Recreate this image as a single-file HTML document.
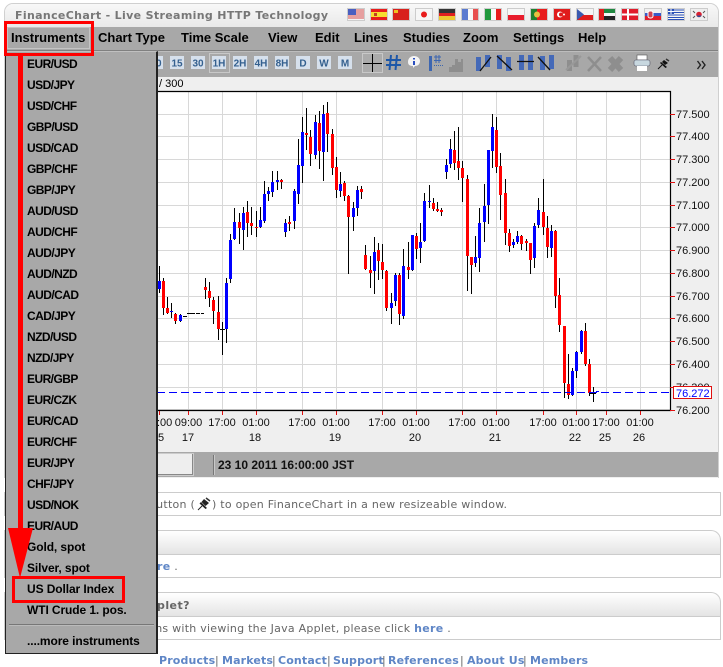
<!DOCTYPE html>
<html><head><meta charset="utf-8"><title>FinanceChart</title>
<style>
html,body{margin:0;padding:0;background:#fff}
#p{position:relative;width:723px;height:667px;overflow:hidden;background:#fff;font-family:"Liberation Sans",sans-serif}
#p div{position:absolute;white-space:nowrap}
.v{font-family:"DejaVu Sans",sans-serif;font-size:11px;color:#666;line-height:14px;letter-spacing:.25px}
.l{font-family:"DejaVu Sans",sans-serif;font-size:11px;font-weight:bold;color:#5f86c6;line-height:14px;letter-spacing:.3px}
.f{letter-spacing:.15px;top:654px}
.s{top:654px;letter-spacing:0}
.m{font-size:13px;font-weight:bold;color:#000;top:30px;line-height:16px}
.d{left:27px;font-size:12px;font-weight:bold;color:#000;line-height:16px;letter-spacing:-.1px}
.e{letter-spacing:-.55px}
.b{background:#fff;border:1px solid #ccc;box-sizing:border-box}
.h{background:linear-gradient(#fff,#e4e4e4);border:1px solid #ccc;box-sizing:border-box;border-radius:0 10px 0 0;border-bottom-color:#c8c8c8}
</style></head><body><div id="p">

<div style="left:4px;top:3px;width:715px;height:475px;background:#efefef;border-radius:9px 9px 0 0;border:1px solid #d0d0d0;border-bottom:0;box-sizing:border-box"></div>
<div style="left:5px;top:4px;width:713px;height:23px;border-radius:8px 8px 0 0;background:linear-gradient(#f8f8f8,#e9e9e9)"></div>
<div style="left:15px;top:9px;font:bold 11px/14px 'DejaVu Sans',sans-serif;color:#777;letter-spacing:.34px">FinanceChart - Live Streaming HTTP Technology</div>

<svg style="position:absolute;left:0;top:0" width="723" height="30" viewBox="0 0 723 30">
<g stroke="#ccc" fill="none"><rect x="347.5" y="8.5" width="17" height="12"/><rect x="370.5" y="8.5" width="17" height="12"/><rect x="392.5" y="8.5" width="17" height="12"/><rect x="415.5" y="8.5" width="17" height="12"/><rect x="438.5" y="8.5" width="17" height="12"/><rect x="461.5" y="8.5" width="17" height="12"/><rect x="484.5" y="8.5" width="17" height="12"/><rect x="507.5" y="8.5" width="17" height="12"/><rect x="530.5" y="8.5" width="17" height="12"/><rect x="553.5" y="8.5" width="17" height="12"/><rect x="576.5" y="8.5" width="17" height="12"/><rect x="598.5" y="8.5" width="17" height="12"/><rect x="621.5" y="8.5" width="17" height="12"/><rect x="644.5" y="8.5" width="17" height="12"/><rect x="667.5" y="8.5" width="17" height="12"/><rect x="690.5" y="8.5" width="17" height="12"/></g>
<!-- US -->
<rect x="348" y="9" width="16" height="11" fill="#f4f4f4"/><path d="M348 10h16M348 12h16M348 14h16M348 16h16M348 18h16" stroke="#d84a4a"/><rect x="348" y="9" width="8" height="6" fill="#4a5fc0"/>
<!-- ES -->
<rect x="371" y="9" width="16" height="11" fill="#e81c1c"/><rect x="371" y="12" width="16" height="5" fill="#f6dd30"/><rect x="374" y="13" width="3" height="3" fill="#c04020"/>
<!-- CN -->
<rect x="393" y="9" width="16" height="11" fill="#d8201c"/><rect x="394" y="10" width="4" height="3" fill="#f0c020"/>
<!-- JP -->
<rect x="416" y="9" width="16" height="11" fill="#f6f6f6"/><circle cx="424" cy="14.500" r="3" fill="#e81c1c"/>
<!-- DE -->
<rect x="439" y="9" width="16" height="4" fill="#333"/><rect x="439" y="13" width="16" height="3" fill="#e02020"/><rect x="439" y="16" width="16" height="4" fill="#eec830"/>
<!-- FR -->
<rect x="462" y="9" width="6" height="11" fill="#5a7ad0"/><rect x="468" y="9" width="5" height="11" fill="#f8f8f8"/><rect x="473" y="9" width="5" height="11" fill="#e85050"/>
<!-- IT -->
<rect x="485" y="9" width="6" height="11" fill="#20983c"/><rect x="491" y="9" width="5" height="11" fill="#f8f8f8"/><rect x="496" y="9" width="5" height="11" fill="#e81c1c"/>
<!-- PL -->
<rect x="508" y="9" width="16" height="6" fill="#f6f6f6"/><rect x="508" y="15" width="16" height="5" fill="#e81c2c"/>
<!-- PT -->
<rect x="531" y="9" width="6" height="11" fill="#208030"/><rect x="537" y="9" width="10" height="11" fill="#e81c1c"/><circle cx="537" cy="14.500" r="3" fill="#e8c040"/>
<!-- TR -->
<rect x="554" y="9" width="16" height="11" fill="#e01c1c"/><circle cx="560" cy="14.500" r="3" fill="#fff"/><circle cx="561" cy="14.500" r="2" fill="#e01c1c"/><circle cx="564" cy="14.500" r="1" fill="#fff"/>
<!-- CZ -->
<rect x="577" y="9" width="16" height="6" fill="#f4f4f4"/><rect x="577" y="15" width="16" height="5" fill="#e01c1c"/><path d="M577 9l7 5.500-7 5.500z" fill="#3a5ab0"/>
<!-- AE -->
<rect x="599" y="9" width="16" height="4" fill="#208840"/><rect x="599" y="13" width="16" height="3" fill="#f6f6f6"/><rect x="599" y="16" width="16" height="4" fill="#222"/><rect x="599" y="9" width="5" height="11" fill="#e01c1c"/>
<!-- DK -->
<rect x="622" y="9" width="16" height="11" fill="#e01c2c"/><path d="M628 9v11M622 14.500h16" stroke="#fff" stroke-width="2"/>
<!-- SK -->
<rect x="645" y="9" width="16" height="4" fill="#f0f0f0"/><rect x="645" y="13" width="16" height="3" fill="#3a5ac8"/><rect x="645" y="16" width="16" height="4" fill="#e01c2c"/><rect x="648" y="11" width="5" height="7" rx="2" fill="#d04050" stroke="#fff"/>
<!-- GR -->
<rect x="668" y="9" width="16" height="11" fill="#f4f4f4"/><path d="M668 10h16M668 12.500h16M668 15h16M668 17.500h16M668 19.500h16" stroke="#2a50b8"/><rect x="668" y="9" width="6" height="5" fill="#2a50b8"/><path d="M671 9v5M668 11.500h6" stroke="#fff"/>
<!-- KR -->
<rect x="691" y="9" width="16" height="11" fill="#eeeeee"/><circle cx="699" cy="14.500" r="2.800" fill="#d82030"/><path d="M696.500 15.500a2.800 2.800 0 0 0 5 0z" fill="#2850a0"/><path d="M693 11l2 2M705 11l-2 2M693 18l2-2M705 18l-2-2" stroke="#555"/>
</svg>

<!-- menu + toolbar background -->
<div style="left:5px;top:27px;width:713px;height:50px;background:#a8a8a8"></div>
<div style="left:5px;top:50px;width:713px;height:1px;background:#808080"></div>
<div style="left:5px;top:51px;width:713px;height:1px;background:#bdbdbd"></div>
<div class="m" style="left:98px">Chart Type</div>
<div class="m" style="left:181px">Time Scale</div>
<div class="m" style="left:268px">View</div>
<div class="m" style="left:315px">Edit</div>
<div class="m" style="left:354px">Lines</div>
<div class="m" style="left:403px">Studies</div>
<div class="m" style="left:463px">Zoom</div>
<div class="m" style="left:513px">Settings</div>
<div class="m" style="left:578px">Help</div>

<!-- toolbar icons -->
<svg style="position:absolute;left:0;top:50px" width="723" height="28" viewBox="0 50 723 28">
<g font-family="Liberation Sans,sans-serif" font-size="10" font-weight="bold" fill="#34608f" text-anchor="middle">
<rect x="149" y="56" width="14" height="13" fill="#d6e0ec"/><text x="156" y="66.500">60</text>
<rect x="170" y="56" width="14" height="13" fill="#d6e0ec"/><text x="177" y="66.500">15</text>
<rect x="191" y="56" width="14" height="13" fill="#d6e0ec"/><text x="198" y="66.500">30</text>
<rect x="209.500" y="53.500" width="20" height="19" fill="#a8a8a8" stroke="#c8c8c8"/><rect x="212" y="56" width="14" height="13" fill="#d6e0ec"/><text x="219" y="66.500">1H</text>
<rect x="233" y="56" width="14" height="13" fill="#d6e0ec"/><text x="240" y="66.500">2H</text>
<rect x="254" y="56" width="14" height="13" fill="#d6e0ec"/><text x="261" y="66.500">4H</text>
<rect x="275" y="56" width="14" height="13" fill="#d6e0ec"/><text x="282" y="66.500">8H</text>
<rect x="296" y="56" width="14" height="13" fill="#d6e0ec"/><text x="303" y="66.500">D</text>
<rect x="317" y="56" width="14" height="13" fill="#d6e0ec"/><text x="324" y="66.500">W</text>
<rect x="338" y="56" width="14" height="13" fill="#d6e0ec"/><text x="345" y="66.500">M</text>
</g>
<rect x="362.500" y="53.500" width="20" height="19" fill="#ababab" stroke="#c8c8c8"/><path d="M363 63.500h19M372.500 54v18" stroke="#000"/>
<path d="M391 55l-1.500 15M397 55l-1.500 15M386 60h15M386 65h15" stroke="#1d57a8" stroke-width="2" fill="none"/>
<path d="M408 62c0-4 3-6 6-6s6 2 6 5-2 5-5 5l-2 2v-2c-3 0-5-1-5-4z" fill="#f4f4f4"/><path d="M414 58v1.500M414 61v4" stroke="#2a4fc0" stroke-width="2"/>
<path d="M430.500 56v15" stroke="#3d66b0" stroke-width="3"/><path d="M436 55v8M439 55v8M434 57h7M434 60.500h7" stroke="#3d66b0"/><path d="M434 65.500h10" stroke="#3d66b0" stroke-dasharray="1 1"/>
<path d="M449 72v-5h3v-2h3v-6h3v3h3v-3h2v13z" fill="#8e8e8e"/>
<g fill="none">
<path d="M478.500 57v14M487.500 55v12M499.500 55v14M508.500 57v14M521.500 55v15M530.500 55v15M542.500 56v14M551.500 55v14" stroke="#4469b8" stroke-width="5"/>
<path d="M480 71l11-14M497 56l15 14M517 61.500h17M538 57l12 13" stroke="#111" stroke-width="1.300"/>
<path d="M569.500 60v11M576 55v12" stroke="#8e8e8e" stroke-width="5"/><path d="M566 70l15-14" stroke="#999" stroke-width="2"/>
<path d="M588 57l13 14M601 57l-13 14" stroke="#8e8e8e" stroke-width="2.500"/>
<path d="M610 58l11 12M621 58l-11 12" stroke="#8e8e8e" stroke-width="6"/>
</g>
<rect x="637" y="55" width="10" height="5" fill="#fff" stroke="#555" stroke-width=".6"/><rect x="634" y="60" width="16" height="6" rx="2" fill="#c8d8e0" stroke="#556"  stroke-width=".6"/><rect x="637" y="66" width="10" height="5" fill="#fff"/>
<path d="M658 69l4-4" stroke="#111"/><path d="M661 62l6 5-1.500 1-5.500-5zM664 60l4 3-3 2-3-3z" fill="#111"/><path d="M666 59l3 2" stroke="#333" stroke-width="1.500"/>
<path d="M697.500 61l3 4-3 4M702 61l3 4-3 4" stroke="#222" stroke-width="1.400" fill="none"/>
</svg>

<div style="top:77px;font-size:11px;line-height:14px;color:#000;left:159px">/ 300</div>

<!-- chart -->
<svg style="position:absolute;left:150px;top:85px" width="573" height="370" viewBox="150 85 573 370" font-family="Liberation Sans,sans-serif" font-size="11">
<rect x="157" y="91" width="513" height="320" fill="#fff"/>
<path d="M157 114.500H670M157 136.500H670M157 159.500H670M157 182.500H670M157 205.500H670M157 227.500H670M157 250.500H670M157 273.500H670M157 296.500H670M157 318.500H670M157 341.500H670M157 364.500H670M157 387.500H670M157 409.500H670M188.500 91V411M222.500 91V411M256.500 91V411M302.500 91V411M336.500 91V411M382.500 91V411M416.500 91V411M462.500 91V411M496.500 91V411M543.500 91V411M576.500 91V411M606.500 91V411M640.500 91V411" stroke="#d8d8d8" fill="none"/>
<path stroke="#000" fill="none" d="M159.500 266V293M163.500 278V315M167.500 297V314M171.500 303V318M175.500 313V324M180.500 314V322M205.500 278V299M209.500 282V307M213.500 297V324M218.500 296V340M222.500 322V355M226.500 278V343M230.500 234V283M234.500 208V240M239.500 213V244M243.500 207V250M247.500 201V237M251.500 207V235M256.500 211V237M260.500 207V228M264.500 181V223M268.500 187V201M272.500 171V197M277.500 171V190M281.500 179V189M285.500 219V237M289.500 216V231M294.500 189V229M298.500 139V204M302.500 117V183M306.500 108V150M310.500 130V166M315.500 115V159M319.500 111V169M323.500 105V181M327.500 102V152M332.500 129V175M336.500 157V198M340.500 172V197M344.500 181V201M348.500 195V274M353.500 202V231M357.500 186V216M361.500 186V199M365.500 245V270M370.500 256V288M374.500 237V294M378.500 243V280M382.500 244V279M386.500 270V311M391.500 293V324M395.500 273V306M399.500 273V325M403.500 249V319M408.500 242V279M412.500 235V271M416.500 233V259M420.500 223V263M424.500 193V242M429.500 185V208M433.500 198V211M437.500 202V212M441.500 208V216M446.500 159V179M450.500 139V168M454.500 131V170M458.500 127V180M462.500 161V202M467.500 175V291M471.500 257V294M475.500 236V267M479.500 208V272M484.500 184V242M488.500 150V224M492.500 114V168M496.500 117V173M500.500 153V220M505.500 179V245M509.500 229V252M513.500 239V248M517.500 231V244M521.500 235V250M526.500 239V251M530.500 243V274M534.500 223V268M538.500 198V228M543.500 179V235M547.500 216V258M551.500 225V257M555.500 230V308M559.500 278V332M564.500 326V398M568.500 354V399M572.500 368V396M576.500 351V378M581.500 330V354M585.500 323V366M589.500 359V396M593.500 387V402M183 316.500H187M187 313.500H195M196 313.500H200M201 313.500H204M220 329.500H225M589 393.500H596"/>
<path stroke="#0000ff" stroke-width="3" fill="none" d="M159.500 281V289M171.500 311V312M180.500 315V321M226.500 283V329M230.500 240V279M234.500 222V239M243.500 213V230M260.500 220V227M264.500 194V221M268.500 191V194M272.500 182V192M277.500 180V182M285.500 223V232M294.500 191V221M298.500 165V194M302.500 132V166M315.500 122V155M323.500 114V152M340.500 184V191M353.500 208V217M357.500 190V208M374.500 252V271M391.500 303V308M395.500 275V301M403.500 266V316M412.500 235V270M420.500 242V248M424.500 201V241M429.500 201V202M446.500 165V172M450.500 149V164M475.500 257V263M479.500 223V258M484.500 206V222M488.500 150V205M492.500 127V151M513.500 242V245M517.500 236V242M534.500 226V258M538.500 210V225M551.500 231V248M572.500 371V395M576.500 352V371M581.500 331V352M597.500 391V392"/>
<path stroke="#ff0000" stroke-width="3" fill="none" d="M163.500 281V308M167.500 308V313M175.500 314V321M205.500 287V290M209.500 291V298M213.500 300V311M218.500 312V329M239.500 222V228M247.500 212V223M251.500 223V226M256.500 227V228M281.500 180V182M289.500 222V224M306.500 133V135M310.500 137V154M319.500 123V151M327.500 113V134M332.500 134V168M336.500 167V190M344.500 183V196M348.500 196V217M361.500 189V192M365.500 255V269M370.500 270V273M378.500 250V261M382.500 262V270M386.500 271V308M399.500 275V314M408.500 267V270M416.500 236V249M433.500 203V209M437.500 209V211M441.500 210V212M454.500 150V163M458.500 161V168M462.500 168V178M467.500 179V256M471.500 257V265M496.500 130V167M500.500 166V195M505.500 193V233M509.500 233V246M521.500 236V244M526.500 241V243M530.500 243V260M543.500 212V227M547.500 228V247M555.500 231V296M559.500 295V325M564.500 326V383M568.500 384V395M585.500 331V364M589.500 364V393M602.500 392V393"/>
<path d="M157 392.500H670" stroke="#0000ff" stroke-dasharray="8 4" fill="none"/>
<path d="M157 91.500H670.500V410.500H157" stroke="#000" fill="none" stroke-width="1.200"/>
<path d="M670 114.500h5M670 136.500h5M670 159.500h5M670 182.500h5M670 205.500h5M670 227.500h5M670 250.500h5M670 273.500h5M670 296.500h5M670 318.500h5M670 341.500h5M670 364.500h5M670 387.500h5M670 410.500h5M159.500 411v4M188.500 411v4M222.500 411v4M256.500 411v4M302.500 411v4M336.500 411v4M382.500 411v4M416.500 411v4M462.500 411v4M496.500 411v4M543.500 411v4M576.500 411v4M606.500 411v4M640.500 411v4" stroke="#e01010" fill="none"/>
<g fill="#111">
<text x="676" y="118">77.500</text><text x="676" y="140">77.400</text><text x="676" y="163">77.300</text><text x="676" y="186">77.200</text><text x="676" y="209">77.100</text><text x="676" y="231">77.000</text><text x="676" y="254">76.900</text><text x="676" y="277">76.800</text><text x="676" y="300">76.700</text><text x="676" y="322">76.600</text><text x="676" y="345">76.500</text><text x="676" y="368">76.400</text><text x="676" y="391">76.300</text><text x="676" y="414">76.200</text>
</g>
<g fill="#111" text-anchor="middle">
<text x="158.500" y="426">17:00</text><text x="188.500" y="426">09:00</text><text x="222" y="426">17:00</text><text x="256" y="426">01:00</text><text x="302" y="426">17:00</text><text x="336" y="426">01:00</text><text x="382" y="426">17:00</text><text x="416" y="426">01:00</text><text x="462" y="426">17:00</text><text x="496" y="426">01:00</text><text x="543" y="426">17:00</text><text x="576" y="426">01:00</text><text x="606" y="426">17:00</text><text x="640" y="426">01:00</text>
<text x="158" y="441">15</text><text x="188" y="441">17</text><text x="255" y="441">18</text><text x="335" y="441">19</text><text x="415" y="441">20</text><text x="495" y="441">21</text><text x="575" y="441">22</text><text x="605" y="441">25</text><text x="639" y="441">26</text>
</g>
<rect x="673.500" y="386.500" width="38" height="12" fill="#fff" stroke="#e01010"/>
<text x="676" y="397" fill="#0000ff">76.272</text>
</svg>

<!-- status bar -->
<div style="left:5px;top:452px;width:713px;height:25px;background:#a8a8a8"></div>
<div style="left:150px;top:453px;width:43px;height:21px;background:#eee;border:1px solid #ccc;border-left:0;box-shadow:inset -1px -1px 0 #888"></div>
<div style="left:213px;top:455px;width:1px;height:20px;background:#777;box-shadow:1px 0 0 #c8c8c8"></div>
<div style="left:218px;top:457px;font-size:12px;font-weight:bold;line-height:16px;color:#111">23 10 2011 16:00:00 JST</div>

<!-- lower page boxes -->
<div class="b" style="left:4px;top:492px;width:717px;height:24px"></div>
<div class="v" style="right:528px;top:498px">Click the new window button (</div>
<svg style="position:absolute;left:197px;top:497px" width="14" height="14" viewBox="0 0 14 14"><path d="M1 13l4-4" stroke="#222"/><path d="M4 5l6 6-1.500 1-6-5.500zM7 2l5 4-3.500 3-4-4z" fill="#222"/><path d="M9 1l4 3" stroke="#333" stroke-width="1.500"/></svg>
<div class="v" style="left:212px;top:498px">) to open FinanceChart in a new resizeable window.</div>
<div class="h" style="left:4px;top:530px;width:717px;height:25px"></div>
<div class="b" style="left:4px;top:554px;width:717px;height:24px"></div>
<div class="v" style="right:545px;top:560px">For more details click <span class="l" style="position:static">here</span> .</div>
<div class="h" style="left:4px;top:592px;width:717px;height:25px"></div>
<div class="l" style="right:533px;top:599px;color:#666;letter-spacing:.45px">Problem with Applet?</div>
<div class="b" style="left:4px;top:616px;width:717px;height:24px"></div>
<div class="v" style="right:272px;top:622px">If you have problems with viewing the Java Applet, please click <span class="l" style="position:static">here</span> .</div>

<div class="l f" style="left:159px">Products</div><div class="v s" style="left:215px">|</div>
<div class="l f" style="left:222px">Markets</div><div class="v s" style="left:272px">|</div>
<div class="l f" style="left:278px">Contact</div><div class="v s" style="left:327px">|</div>
<div class="l f" style="left:333px">Support</div><div class="v s" style="left:382px">|</div>
<div class="l f" style="left:388px">References</div><div class="v s" style="left:460px">|</div>
<div class="l f" style="left:467px">About Us</div><div class="v s" style="left:523px">|</div>
<div class="l f" style="left:530px">Members</div>

<!-- dropdown -->
<div style="left:5px;top:51px;width:153px;height:603px;background:#a8a8a8;border:1px solid #222;border-top:1px solid #c0c0c0;box-sizing:border-box;border-right-width:2px"></div>
<div class="d e" style="top:56px">EUR/USD</div>
<div class="d e" style="top:77px">USD/JPY</div>
<div class="d e" style="top:98px">USD/CHF</div>
<div class="d e" style="top:119px">GBP/USD</div>
<div class="d e" style="top:140px">USD/CAD</div>
<div class="d e" style="top:161px">GBP/CHF</div>
<div class="d e" style="top:182px">GBP/JPY</div>
<div class="d e" style="top:203px">AUD/USD</div>
<div class="d e" style="top:224px">AUD/CHF</div>
<div class="d e" style="top:245px">AUD/JPY</div>
<div class="d e" style="top:266px">AUD/NZD</div>
<div class="d e" style="top:287px">AUD/CAD</div>
<div class="d e" style="top:308px">CAD/JPY</div>
<div class="d e" style="top:329px">NZD/USD</div>
<div class="d e" style="top:350px">NZD/JPY</div>
<div class="d e" style="top:371px">EUR/GBP</div>
<div class="d e" style="top:392px">EUR/CZK</div>
<div class="d e" style="top:413px">EUR/CAD</div>
<div class="d e" style="top:434px">EUR/CHF</div>
<div class="d e" style="top:455px">EUR/JPY</div>
<div class="d e" style="top:476px">CHF/JPY</div>
<div class="d e" style="top:497px">USD/NOK</div>
<div class="d e" style="top:518px">EUR/AUD</div>
<div class="d" style="top:539px">Gold, spot</div>
<div class="d" style="top:560px">Silver, spot</div>
<div class="d" style="top:581px">US Dollar Index</div>
<div class="d" style="top:602px">WTI Crude 1. pos.</div>
<div style="left:9px;top:624px;width:145px;height:1px;background:#777;box-shadow:0 1px 0 #bbb"></div>
<div class="d" style="top:633px">....more instruments</div>

<!-- instruments button -->
<div style="left:7px;top:27px;width:83px;height:22px;border:1px solid #c4c4c4;box-sizing:border-box"></div>
<div class="m" style="left:11px;top:30px">Instruments</div>

<!-- red annotation -->
<svg style="position:absolute;left:0;top:0" width="723" height="667" viewBox="0 0 723 667" fill="none">
<rect x="5.500" y="22.500" width="87" height="32" stroke="#f00" stroke-width="3"/>
<rect x="13.500" y="577.500" width="110" height="24" stroke="#f00" stroke-width="3"/>
<path d="M18 55h5v473h10l-13 50-12-50h10z" fill="#f00"/>
</svg>
</div></body></html>
